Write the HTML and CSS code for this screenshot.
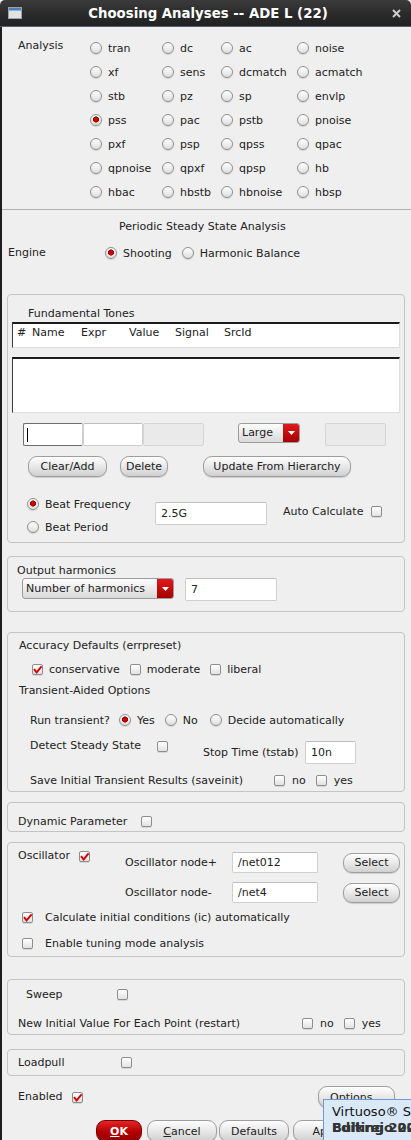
FILE: index.html
```html
<!DOCTYPE html>
<html>
<head>
<meta charset="utf-8">
<title>Choosing Analyses -- ADE L (22)</title>
<link rel="stylesheet" href="styles.css">
</head>
<body>
<div class="window">
  <div class="titlebar">
    <svg class="wicon" width="14" height="12" viewBox="0 0 14 12"><rect x="0.5" y="0.5" width="13" height="11" fill="#e2e2e2" stroke="#9aa3ad"/><rect x="1" y="1" width="12" height="2.5" fill="#4b7fc4"/></svg>
    <div class="title">Choosing Analyses -- ADE L (22)</div>
    <svg class="close" width="9" height="9" viewBox="0 0 9 9"><path d="M1 1 8 8 M8 1 1 8" stroke="#cdcdcd" stroke-width="2" fill="none"/></svg>
  </div>
  <div class="content">
    <div class="analysis">
      <div class="alabel">Analysis</div>
      <div class="agrid">
        <div class="opt"><span class="radio"></span>tran</div>
        <div class="opt"><span class="radio"></span>dc</div>
        <div class="opt"><span class="radio"></span>ac</div>
        <div class="opt"><span class="radio"></span>noise</div>
        <div class="opt"><span class="radio"></span>xf</div>
        <div class="opt"><span class="radio"></span>sens</div>
        <div class="opt"><span class="radio"></span>dcmatch</div>
        <div class="opt"><span class="radio"></span>acmatch</div>
        <div class="opt"><span class="radio"></span>stb</div>
        <div class="opt"><span class="radio"></span>pz</div>
        <div class="opt"><span class="radio"></span>sp</div>
        <div class="opt"><span class="radio"></span>envlp</div>
        <div class="opt"><span class="radio on"></span>pss</div>
        <div class="opt"><span class="radio"></span>pac</div>
        <div class="opt"><span class="radio"></span>pstb</div>
        <div class="opt"><span class="radio"></span>pnoise</div>
        <div class="opt"><span class="radio"></span>pxf</div>
        <div class="opt"><span class="radio"></span>psp</div>
        <div class="opt"><span class="radio"></span>qpss</div>
        <div class="opt"><span class="radio"></span>qpac</div>
        <div class="opt"><span class="radio"></span>qpnoise</div>
        <div class="opt"><span class="radio"></span>qpxf</div>
        <div class="opt"><span class="radio"></span>qpsp</div>
        <div class="opt"><span class="radio"></span>hb</div>
        <div class="opt"><span class="radio"></span>hbac</div>
        <div class="opt"><span class="radio"></span>hbstb</div>
        <div class="opt"><span class="radio"></span>hbnoise</div>
        <div class="opt"><span class="radio"></span>hbsp</div>
      </div>
    </div>
    <div class="sep"></div>
    <div class="heading">Periodic Steady State Analysis</div>
    <div class="engine">
      <div class="elabel">Engine</div>
      <div class="opt"><span class="radio on"></span>Shooting</div>
      <div class="opt hb-opt"><span class="radio"></span>Harmonic Balance</div>
    </div>

    <div class="group g-tones">
      <div class="gt-title">Fundamental Tones</div>
      <div class="tbl-head">
        <span class="th th-n">#</span>
        <span class="th th-name">Name</span>
        <span class="th th-expr">Expr</span>
        <span class="th th-val">Value</span>
        <span class="th th-sig">Signal</span>
        <span class="th">SrcId</span>
      </div>
      <div class="tbl-body"></div>
      <div class="frow">
        <div class="field focus f60"><span class="caret"></span></div>
        <div class="field f60"></div>
        <div class="field dis f61"></div>
        <div class="combo c-large"><span class="ctext">Large</span><span class="carrow"><svg width="7" height="4" viewBox="0 0 7 4"><path d="M0 0H7L3.5 4Z" fill="#fff"/></svg></span></div>
        <div class="field dis f61 f-last"></div>
      </div>
      <div class="brow">
        <div class="btn b-clear">Clear/Add</div>
        <div class="btn b-delete">Delete</div>
        <div class="btn b-update">Update From Hierarchy</div>
      </div>
      <div class="beat">
        <div class="beat-opts">
          <div class="opt r16"><span class="radio on"></span>Beat Frequency</div>
          <div class="opt r16"><span class="radio"></span>Beat Period</div>
        </div>
        <div class="field f-beat">2.5G</div>
        <div class="auto">Auto Calculate <span class="cb"></span></div>
      </div>
    </div>

    <div class="group g-out">
      <div class="glabel">Output harmonics</div>
      <div class="orow">
        <div class="combo c-harm"><span class="ctext">Number of harmonics</span><span class="carrow"><svg width="7" height="4" viewBox="0 0 7 4"><path d="M0 0H7L3.5 4Z" fill="#fff"/></svg></span></div>
        <div class="field f-harm">7</div>
      </div>
    </div>

    <div class="group g-acc">
      <div class="glabel">Accuracy Defaults (errpreset)</div>
      <div class="crow">
        <div class="copt"><span class="cb"><svg viewBox="0 0 11 11"><path d="M2 5.2 4.6 8.4 9.6 2.4" fill="none" stroke="#d40000" stroke-width="1.9"/></svg></span>conservative</div>
        <div class="copt"><span class="cb"></span>moderate</div>
        <div class="copt"><span class="cb"></span>liberal</div>
      </div>
      <div class="glabel tao">Transient-Aided Options</div>
      <div class="runrow">
        <span class="run-l">Run transient?</span>
        <div class="opt"><span class="radio on"></span>Yes</div>
        <div class="opt r-no"><span class="radio"></span>No</div>
        <div class="opt r-dec"><span class="radio"></span>Decide automatically</div>
      </div>
      <div class="detrow">
        <span class="det-l">Detect Steady State</span>
        <span class="cb"></span>
        <span class="stop-l">Stop Time (tstab)</span>
        <div class="field f-stop">10n</div>
      </div>
      <div class="saverow">
        <span class="save-l">Save Initial Transient Results (saveinit)</span>
        <div class="copt c7"><span class="cb"></span>no</div>
        <div class="copt c7 c-yes"><span class="cb"></span>yes</div>
      </div>
    </div>

    <div class="group g-dyn">
      <div class="lrow"><span class="dyn-l">Dynamic Parameter</span><span class="cb"></span></div>
    </div>

    <div class="group g-osc">
      <div class="osc-top">
        <div class="osc-left"><span class="osc-l">Oscillator</span><span class="cb cb-osc"><svg viewBox="0 0 11 11"><path d="M2 5.2 4.6 8.4 9.6 2.4" fill="none" stroke="#d40000" stroke-width="1.9"/></svg></span></div>
        <div class="osc-grid">
          <span class="on-l">Oscillator node+</span>
          <div class="field f-node">/net012</div>
          <div class="btn b-select">Select</div>
          <span class="on-l">Oscillator node-</span>
          <div class="field f-node">/net4</div>
          <div class="btn b-select">Select</div>
        </div>
      </div>
      <div class="copt osc-c1"><span class="cb"><svg viewBox="0 0 11 11"><path d="M2 5.2 4.6 8.4 9.6 2.4" fill="none" stroke="#d40000" stroke-width="1.9"/></svg></span>Calculate initial conditions (ic) automatically</div>
      <div class="copt osc-c2"><span class="cb"></span>Enable tuning mode analysis</div>
    </div>

    <div class="group g-sweep">
      <div class="lrow sw1"><span class="sw-l">Sweep</span><span class="cb"></span></div>
      <div class="lrow sw2">
        <span class="rs-l">New Initial Value For Each Point (restart)</span>
        <div class="copt c7"><span class="cb"></span>no</div>
        <div class="copt c7 c-yes2"><span class="cb"></span>yes</div>
      </div>
    </div>

    <div class="group g-load">
      <div class="lrow"><span class="lp-l">Loadpull</span><span class="cb"></span></div>
    </div>

    <div class="enabled">
      <span class="en-l">Enabled</span>
      <span class="cb"><svg viewBox="0 0 11 11"><path d="M2 5.2 4.6 8.4 9.6 2.4" fill="none" stroke="#d40000" stroke-width="1.9"/></svg></span>
      <div class="btn b-options">Options...</div>
    </div>

    <div class="actions">
      <div class="btn b-ok"><u>O</u>K</div>
      <div class="btn b-act b-cancel"><u>C</u>ancel</div>
      <div class="btn b-act b-def">Defaults</div>
      <div class="btn b-act b-apply">Apply</div>
    </div>
  </div>

  <div class="tooltip">
    <div class="tt1">Virtuoso® Studio Design</div>
    <div class="tt2"><span>Editing 2020</span><span>Bulkrejo 2020</span></div>
  </div>
</div>
</body>
</html>
```

FILE: styles.css
```css
* { box-sizing: border-box; }
html, body { margin: 0; padding: 0; }
body {
  background: #efefef;
  font-family: "DejaVu Sans", "Liberation Sans", sans-serif;
  font-size: 11px;
  color: #222;
}
.window {
  position: relative;
  width: 411px;
  height: 1140px;
  overflow: hidden;
  background: #efefef;
}

/* title bar */
.titlebar {
  height: 27px;
  display: flex;
  align-items: center;
  background: linear-gradient(#3b3b3b, #2a2a2a 55%, #222);
  border-radius: 5px 5px 0 0;
  border-bottom: 1px solid #56616f;
}
.wicon { margin-left: 8px; flex: none; }
.title {
  flex: 1;
  text-align: center;
  color: #fff;
  font-weight: bold;
  font-size: 13.3px;
  padding-left: 2px;
}
.close { margin-right: 10px; flex: none; }

.content {
  border-left: 2px solid #1e1e1e;
  height: 1113px;
}

/* controls */
.radio {
  width: 12px;
  height: 12px;
  flex: none;
  border-radius: 50%;
  border: 1px solid #8f8f8f;
  background: linear-gradient(#ffffff, #dedede);
  box-shadow: 0 1px 1px rgba(0,0,0,0.12);
}
.radio.on {
  background: radial-gradient(circle at 50% 45%, #e00000 0, #c00000 2px, #8a0000 2.8px, rgba(255,255,255,0) 3.3px), linear-gradient(#ffffff, #dedede);
}
.cb {
  width: 11px;
  height: 11px;
  flex: none;
  border: 1px solid #8d8d8d;
  border-radius: 2px;
  background: linear-gradient(#ffffff, #e2e2e2);
  box-shadow: 0 1px 0 rgba(0,0,0,0.10);
  display: inline-flex;
}
.cb svg { width: 11px; height: 11px; margin: -1px; flex: none; overflow: visible; }
.opt { display: flex; align-items: center; gap: 6px; white-space: nowrap; }
.copt { display: flex; align-items: center; gap: 6px; white-space: nowrap; }
.copt.c7 { gap: 7px; }

.field {
  height: 23px;
  background: #fff;
  border: 1px solid #cfcfcf;
  border-top-color: #bdbdbd;
  border-radius: 2px;
  padding-left: 5px;
  line-height: 21px;
  flex: none;
}
.field.dis { background: #eaeaea; border-color: #d6d6d6; }
.field.focus { border-color: #6e6e6e; border-right-color: #cfcfcf; }
.caret { display: block; width: 1px; height: 14px; background: #000; margin: 4px 0 0 -2px; }
.f60 { width: 60px; }
.f61 { width: 61px; }

.combo {
  display: flex;
  height: 20px;
  flex: none;
  border: 1px solid #9c9c9c;
  border-radius: 3px;
  background: linear-gradient(#fdfdfd, #d9d9d9);
  overflow: hidden;
}
.ctext { flex: 1; padding-left: 3px; line-height: 18px; white-space: nowrap; }
.carrow {
  width: 16px;
  flex: none;
  background: linear-gradient(#e11a1a, #a40000);
  display: flex;
  align-items: center;
  justify-content: center;
}

.btn {
  height: 21px;
  flex: none;
  border: 1px solid #9e9e9e;
  border-radius: 9px;
  background: linear-gradient(#fefefe, #e8e8e8 50%, #d0d0d0);
  box-shadow: 0 1px 1px rgba(0,0,0,0.15);
  display: flex;
  align-items: center;
  justify-content: center;
  white-space: nowrap;
}

/* analysis */
.analysis { display: flex; padding: 9px 0 5px 16px; }
.alabel { width: 72px; line-height: 14px; margin-top: 3px; flex: none; }
.agrid {
  display: grid;
  grid-template-columns: 72px 59px 76px auto;
  grid-auto-rows: 24px;
}
.sep { height: 1px; background: #b0b0b0; }
.heading { margin-top: 10px; line-height: 14px; padding-left: 117px; }
.engine { display: flex; align-items: center; height: 20px; margin-top: 9px; padding-left: 6px; }
.elabel { width: 97px; flex: none; margin-top: -2px; }
.hb-opt { margin-left: 10px; }

/* groups */
.group {
  border: 1px solid #c4c4c4;
  border-radius: 4px;
  margin-left: 5px;
  width: 398px;
}
.glabel { line-height: 14px; }

.g-tones { margin-top: 31px; padding: 12px 0 7px 0; }
.gt-title { line-height: 14px; padding-left: 20px; }
.tbl-head, .tbl-body {
  margin-left: 4px;
  width: 388px;
  background: #fff;
  border-top: 2px solid #1c1c1c;
  border-left: 1px solid #3a3a3a;
  border-right: 1px solid #dedede;
  border-bottom: 1px solid #dedede;
}
.tbl-head {
  margin-top: 1px;
  height: 26px;
  display: flex;
  padding: 2px 0 0 4px;
  line-height: 14px;
}
.th { flex: none; }
.th-n { width: 15px; }
.th-name { width: 49px; }
.th-expr { width: 48px; }
.th-val { width: 46px; }
.th-sig { width: 49px; }
.tbl-body { margin-top: 9px; height: 56px; }

.frow { display: flex; margin-top: 10px; height: 23px; padding-left: 15px; }
.c-large { width: 62px; margin-left: 34px; }
.f-last { margin-left: 25px; }

.brow { display: flex; margin-top: 10px; padding-left: 20px; }
.b-clear { width: 79px; }
.b-delete { width: 48px; margin-left: 13px; }
.b-update { width: 148px; margin-left: 35px; }

.beat { display: flex; margin-top: 19px; padding-left: 19px; height: 39px; }
.beat-opts { width: 128px; flex: none; display: flex; flex-direction: column; gap: 7px; }
.r16 { height: 16px; }
.f-beat { width: 112px; margin-top: 6px; }
.auto { display: flex; align-items: center; gap: 8px; margin-left: 16px; margin-top: 8px; height: 14px; white-space: nowrap; }

.g-out { margin-top: 13px; padding: 7px 0 10px 9px; }
.orow { display: flex; height: 23px; }
.c-harm { width: 152px; height: 21px; margin-left: 5px; }
.c-harm .ctext { line-height: 19px; }
.f-harm { width: 92px; margin-left: 11px; }

.g-acc { margin-top: 20px; padding: 6px 0 3px 11px; }
.crow { display: flex; gap: 10px; margin-top: 8px; height: 16px; padding-left: 13px; }
.tao { margin-top: 7px; }
.runrow { display: flex; align-items: center; margin-top: 14px; height: 16px; padding-left: 11px; }
.run-l { width: 89px; flex: none; }
.r-no { margin-left: 10px; }
.r-dec { margin-left: 12px; }
.detrow { display: flex; align-items: flex-start; margin-top: 13px; height: 23px; padding-left: 11px; }
.det-l { width: 127px; flex: none; line-height: 14px; margin-top: -2px; }
.stop-l { width: 102px; flex: none; line-height: 14px; margin: 5px 0 0 35px; }
.f-stop { width: 51px; }
.saverow { display: flex; align-items: center; margin-top: 8px; height: 16px; padding-left: 11px; }
.save-l { width: 244px; flex: none; }
.c-yes { margin-left: 10px; gap: 6px; }

.g-dyn { margin-top: 10px; padding: 11px 0 3px 10px; }
.lrow { display: flex; align-items: center; height: 14px; }
.dyn-l { width: 123px; flex: none; }

.g-osc { margin-top: 10px; padding: 6px 0 5px 10px; }
.osc-top { display: flex; }
.osc-left { display: flex; align-items: flex-start; flex: none; }
.osc-l { width: 61px; line-height: 14px; }
.cb-osc { margin-top: 2px; }
.osc-grid {
  display: grid;
  grid-template-columns: 107px 86px 82px;
  grid-auto-rows: 21px;
  row-gap: 9px;
  margin: 3px 0 0 35px;
  align-items: center;
}
.f-node { height: 21px; line-height: 19px; width: 86px; }
.b-select { width: 57px; height: 20px; margin-left: 25px; }
.osc-c1 { margin-top: 6px; height: 16px; padding-left: 4px; gap: 12px; }
.osc-c2 { margin-top: 10px; height: 16px; padding-left: 4px; gap: 12px; }

.g-sweep { margin-top: 22px; padding: 7px 0 4px 0; }
.sw1 { padding-left: 18px; }
.sw-l { width: 91px; flex: none; }
.sw2 { margin-top: 15px; padding-left: 10px; }
.rs-l { width: 284px; flex: none; }
.c-yes2 { margin-left: 10px; }

.g-load { margin-top: 14px; padding: 5px 0 6px 10px; }
.lp-l { width: 103px; flex: none; }

.enabled { display: flex; align-items: center; margin-top: 10px; height: 22px; padding-left: 16px; }
.en-l { width: 54px; flex: none; margin-top: -2px; }
.b-options { width: 77px; height: 22px; margin-left: 235px; }

.actions { display: flex; margin-top: 12px; padding-left: 94px; }
.actions .btn { height: 22px; }
.b-ok {
  width: 46px;
  background: linear-gradient(#e42626, #b20000 55%, #940000);
  border-color: #7a0000;
  color: #fff;
  font-weight: bold;
}
.b-cancel { width: 70px; margin-left: 5px; }
.b-def { width: 70px; margin-left: 2px; }
.b-apply { width: 70px; margin-left: 4px; }

/* tooltip overlay */
.tooltip {
  position: absolute;
  left: 323px;
  top: 1099px;
  width: 100px;
  height: 46px;
  background: #dae9fa;
  border: 1px solid #7099cc;
  padding: 4px 0 0 8px;
  font-size: 13px;
  color: #111;
  white-space: nowrap;
  overflow: hidden;
}
.tt1 { line-height: 16px; }
.tt2 { display: grid; line-height: 16px; font-weight: bold; color: #333; }
.tt2 span { grid-area: 1 / 1; }
```
